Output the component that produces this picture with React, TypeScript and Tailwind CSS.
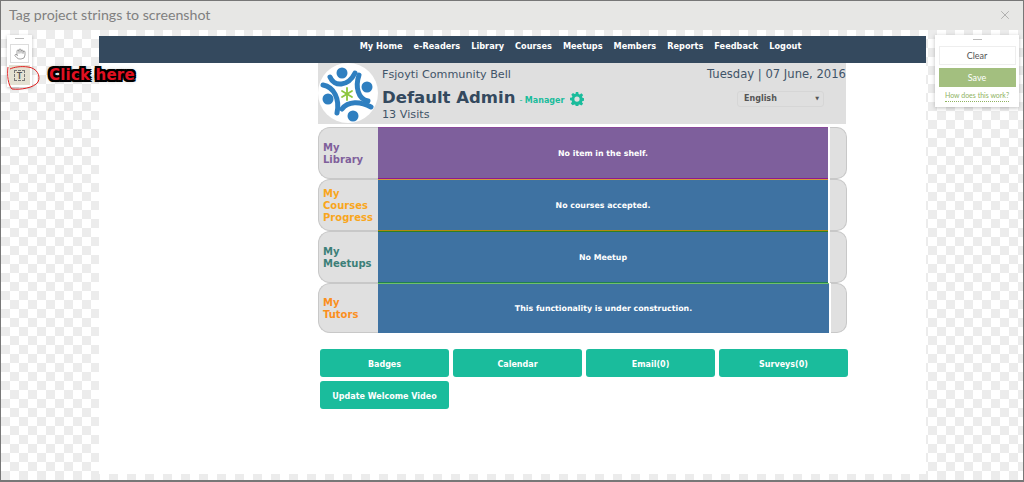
import React from "react";
import { Hand, X } from "lucide-react";

const navItems = ["My Home", "e-Readers", "Library", "Courses", "Meetups", "Members", "Reports", "Feedback", "Logout"];

const rows = [
  { label: ["My", "Library"], color: "text-[#7f5f9b]", msg: "No item in the shelf.", bar: "bg-[#7e5f9c]", line: "border-t-[#8a4a9a] border-b-[#8e1a8e]", h: "h-[52px]", gap: "w-[450px]" },
  { label: ["My", "Courses", "Progress"], color: "text-[#f9a61c]", msg: "No courses accepted.", bar: "bg-[#3e72a2]", line: "border-t-[#d49a3a] border-b-[#b08a10]", h: "h-[52px]", gap: "w-[450px]" },
  { label: ["My", "Meetups"], color: "text-[#3c7f78]", msg: "No Meetup", bar: "bg-[#3e72a2]", line: "border-t-[#2f7f20] border-b-[#1f8050]", h: "h-[52px]", gap: "w-[450px]" },
  { label: ["My", "Tutors"], color: "text-[#fb8f1d]", msg: "This functionality is under construction.", bar: "bg-[#3e72a2]", line: "border-t-[#6fbf6a] border-b-[#3e72a2]", h: "h-[50px]", gap: "w-[451px]" },
];

function Logo() {
  return (
    <svg width="60" height="60" viewBox="0 0 60 60" className="shrink-0">
      <circle cx="30" cy="30" r="30" fill="#fff" />
      <g fill="#2f7fc0">
        <circle cx="24" cy="10" r="5.5" />
        <circle cx="49" cy="24" r="5.5" />
        <circle cx="10" cy="36" r="5.5" />
        <circle cx="35" cy="53" r="5.5" />
      </g>
      <g fill="none" stroke="#2f7fc0" strokeWidth="5" strokeLinecap="round">
        <path d="M12 14 C16 24 30 24 37 10" />
        <path d="M41 12 C37 24 40 36 50 38" />
        <path d="M5 22 C16 24 22 36 19 50" />
        <path d="M24 46 C30 38 42 38 53 44" />
      </g>
      <g stroke="#8dc63f" strokeWidth="1.8" strokeLinecap="round">
        <path d="M29 25V37" />
        <path d="M24 28L34 34" />
        <path d="M34 28L24 34" />
      </g>
    </svg>
  );
}

function Gear() {
  return (
    <svg width="14" height="14" viewBox="0 0 16 16" className="ml-[6px]">
      <path
        fill="#1abc9c"
        fillRule="evenodd"
        d="M6.6 0h2.8l.4 2.2 1.3.6L13 1.5l2 2-1.3 1.9.5 1.3 2.2.4v2.8l-2.2.4-.5 1.3 1.3 1.9-2 2-1.9-1.3-1.3.5-.4 2.2H6.6l-.4-2.2-1.3-.5L3 15l-2-2 1.3-1.9-.5-1.3L0 9.4V6.6l2.2-.4.5-1.3L1.4 3l2-2 1.9 1.3 1.3-.6zM8 5a3 3 0 1 0 0 6 3 3 0 0 0 0-6z"
      />
    </svg>
  );
}

export default function App() {
  return (
    <div className="w-[1024px] h-[482px] flex flex-col border border-[#777] border-b-2 relative overflow-hidden bg-white font-['Lato','Open_Sans',sans-serif]">
      <div className="h-[29px] shrink-0 bg-[#e7e7e5] flex items-center justify-between pl-[8px] pr-[11px] pb-[2px]">
        <span className="text-[14.2px] text-[#808080]">Tag project strings to screenshot</span>
        <X size={14} strokeWidth={1} className="text-[#888]" />
      </div>

      <div className="flex-1 flex pt-[5px] pb-[6px] bg-[repeating-conic-gradient(#ececec_0_25%,#ffffff_0_50%)] bg-[length:18px_18px]">
        <div className="w-[98px] shrink-0 pl-[6px]">
          <div className="w-[25px] h-[52px] bg-white shadow-[0_1px_3px_rgba(0,0,0,0.25)] flex flex-col items-center pt-[3px]">
            <div className="w-[9px] h-[1px] bg-[#bbb] mb-[5px]" />
            <div className="w-[19px] h-[19px] bg-white border border-[#ddd] flex items-center justify-center">
              <Hand size={12} strokeWidth={1.2} className="text-[#666]" />
            </div>
            <div className="w-[21px] h-[20px] mt-[2px] bg-[#e4e1d2] flex items-center justify-center">
              <div className="w-[11px] h-[11px] border border-dashed border-[#777] flex items-center justify-center text-[9px] leading-none font-bold text-[#555]">T</div>
            </div>
          </div>
        </div>

        <div className="w-[827px] shrink-0 mt-[1px] bg-white font-['DejaVu_Sans',sans-serif]">
          <div className="h-[27px] bg-[#34495e] flex items-center justify-center gap-[11px] pl-[136px] pb-[7px] text-[8.2px] font-bold text-white">
            {navItems.map((n) => (
              <span key={n}>{n}</span>
            ))}
          </div>

          <div className="w-[528px] h-[61px] ml-[219px] bg-[#dfdfdf] flex">
            <Logo />
            <div className="ml-[4px] flex-1 relative">
              <div className="text-[11.2px] leading-[13px] text-[#3f5468] mt-[5px]">Fsjoyti Community Bell</div>
              <div className="flex items-center mt-[7px] h-[21px]">
                <span className="text-[16.5px] font-bold text-[#34495e]">Default Admin</span>
                <span className="text-[8px] text-[#1abc9c] ml-[4px] mt-[4px]">
                  - <b>Manager</b>
                </span>
                <Gear />
              </div>
              <div className="text-[11.2px] leading-[12px] text-[#3f5468]">13 Visits</div>
              <div className="absolute right-0 top-[4px] text-[11.6px] leading-[14px] text-[#3f5468]">Tuesday | 07 June, 2016</div>
              <div className="absolute right-[22px] top-[28px] w-[87px] h-[16px] border border-[#d6d6d6] rounded-[3px] flex items-center justify-between pl-[6px] pr-[4px] text-[8px] font-bold text-[#555]">
                <span>English</span>
                <span className="text-[5px]">▼</span>
              </div>
            </div>
          </div>

          <div className="ml-[219px] mt-[3px] w-[529px] flex flex-col">
            {rows.map((r) => (
              <div key={r.msg} className={`${r.h} flex`}>
                <div className={`w-[60px] shrink-0 bg-[#e0e0e0] border border-r-0 border-[#c8c8c8] rounded-l-[12px] flex flex-col justify-center pl-[4px] pt-[2px] text-[10px] leading-[12px] font-bold ${r.color}`}>
                  {r.label.map((l) => (
                    <span key={l}>{l}</span>
                  ))}
                </div>
                <div className={`${r.gap} shrink-0 ${r.bar} ${r.line} border-y pt-[1px] flex items-center justify-center text-[7.85px] font-bold text-white`}>
                  {r.msg}
                </div>
                <div className="flex-1 ml-[2px] bg-[#e0e0e0] border border-l-0 border-[#c8c8c8] rounded-r-[10px]" />
              </div>
            ))}
          </div>

          <div className="ml-[221px] mt-[16px] w-[532px] flex flex-wrap gap-x-[4px] gap-y-[4px]">
            {["Badges", "Calendar", "Email(0)", "Surveys(0)", "Update Welcome Video"].map((b) => (
              <div key={b} className="w-[129px] h-[28px] bg-[#1abc9c] rounded-[3px] pt-[3px] flex items-center justify-center text-[8px] font-bold text-white">
                {b}
              </div>
            ))}
          </div>
        </div>

        <div className="flex-1 pl-[9px]">
          <div className="w-[84px] h-[72px] bg-white shadow-[0_1px_4px_rgba(0,0,0,0.25)] flex flex-col items-center pt-[4px]">
            <div className="w-[9px] h-[1px] bg-[#bbb] mb-[6px]" />
            <div className="w-[77px] h-[19px] border border-[#eee] flex items-center justify-center text-[9px] text-[#555]">Clear</div>
            <div className="w-[77px] h-[19px] mt-[3px] bg-[#a3bf7f] flex items-center justify-center text-[9px] text-white">Save</div>
            <span className="mt-[3px] text-[7px] leading-[11px] text-[#8fb35f] border-b border-dotted border-[#8fb35f]">How does this work?</span>
          </div>
        </div>
      </div>

      <svg width="40" height="30" viewBox="0 0 40 30" className="absolute left-[3px] top-[62px]">
        <path d="M4 4 C3 12 4 22 8 26 C16 27 30 25 34 19 C37 13 33 5 24 4 C17 3 10 4 6 6" fill="none" stroke="#e02020" strokeWidth="1" />
      </svg>
      <div className="absolute left-[48px] top-[64px] text-[15px] leading-[20px] font-bold tracking-[0.2px] font-['DejaVu_Sans',sans-serif] text-[#e01020] [text-shadow:-2px_0_0_#000,2px_0_0_#000,0_-2px_0_#000,0_2px_0_#000,-2px_-2px_0_#000,2px_2px_0_#000,-2px_2px_0_#000,2px_-2px_0_#000,0_0_5px_#777]">
        Click here
      </div>
    </div>
  );
}
